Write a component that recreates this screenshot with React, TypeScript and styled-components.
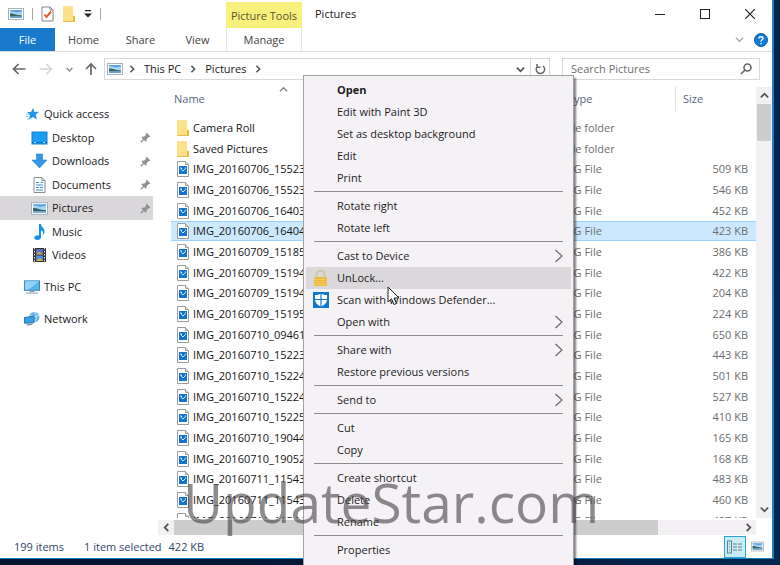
import React from "react";
import styled, { createGlobalStyle, css } from "styled-components";

const GlobalStyle = createGlobalStyle`
  * { box-sizing: border-box; }
  html, body, #root { height: 100%; margin: 0; }
  body { overflow: hidden; }
  body, button, input, table {
    font-family: "Open Sans", "Noto Sans", sans-serif;
    font-size: 11px;
    line-height: 16px;
  }
  button, input { border: 0; padding: 0; margin: 0; background: none; color: inherit; }
  svg { display: block; flex: none; }
`;

const Desktop = styled.div`
  position: relative;
  display: flex;
  height: 100%;
  padding: 0 6px 6px 0;
  overflow: hidden;
  background: linear-gradient(100deg, #01142c 0%, #021b3b 60%, #03274f 100%);
`;

const Window = styled.main`
  flex: 1;
  min-width: 0;
  display: flex;
  flex-direction: column;
  background: #fff;
  border: solid #1883c4;
  border-width: 0 2px 1px 0;
  color: #1a1a1a;
`;

const TitleBar = styled.header`
  display: flex;
  height: 28px;
`;

const QuickTools = styled.div`
  display: flex;
  align-items: center;
  width: 226px;
  padding-left: 8px;
  gap: 8px;
`;

const Divider = styled.span`
  width: 1px;
  height: 12px;
  background: #a6a6a6;
`;

const IconButton = styled.button`
  display: flex;
  align-items: center;
  justify-content: center;
`;

const ToolsLabel = styled.div`
  width: 76px;
  margin-top: 2px;
  padding-top: 6px;
  text-align: center;
  background: #f8f07c;
  color: #55552f;
`;

const WindowTitle = styled.h1`
  flex: 1;
  margin: 0;
  padding: 6px 0 0 13px;
  font-size: 11px;
  font-weight: 400;
`;

const WindowButton = styled(IconButton)`
  width: 45px;
  height: 27px;
`;

const Tabs = styled.nav`
  display: flex;
  align-items: stretch;
  height: 24px;
  border-bottom: 1px solid #dadbdc;
  color: #444;
`;

const Tab = styled.button<{ $kind?: "file" | "tool" }>`
  width: 57px;
  ${({ $kind }) =>
    $kind === "file" && css`width: 55px; background: #1979ca; color: #fff;`}
  ${({ $kind }) =>
    $kind === "tool" && css`width: 76px; border: solid #e6e6e6; border-width: 0 1px;`}
`;

const TabsEnd = styled.div`
  flex: 1;
  display: flex;
  align-items: center;
  justify-content: flex-end;
  gap: 10px;
  padding-right: 4px;
`;

const NavRow = styled.div`
  display: flex;
  align-items: center;
  height: 34px;
  padding: 0 12px;
`;

const History = styled.div`
  display: flex;
  align-items: center;
  gap: 13px;
  width: 92px;
`;

const UpGroup = styled.div`
  display: flex;
  align-items: center;
  gap: 11px;
`;

const AddressBar = styled.div`
  flex: 1;
  display: flex;
  align-items: center;
  height: 22px;
  border: 1px solid #d9d9d9;
  padding-left: 2px;
  > svg:first-child { margin-right: 5px; }
`;

const Crumb = styled.button`
  margin: 0 8px;
`;

const AddressEnd = styled.div`
  display: flex;
  align-self: stretch;
  margin-left: auto;
  button { width: 19px; }
  button + button { border-left: 1px solid #d9d9d9; }
`;

const SearchBox = styled.label`
  display: flex;
  align-items: center;
  width: 198px;
  height: 22px;
  margin-left: 12px;
  padding: 0 7px 0 8px;
  border: 1px solid #d9d9d9;
`;

const SearchInput = styled.input`
  flex: 1;
  min-width: 0;
  outline: 0;
  &::placeholder { color: #6d6d6d; opacity: 1; }
`;

const Body = styled.div`
  flex: 1;
  display: flex;
  min-height: 0;
`;

const Tree = styled.nav`
  width: 158px;
  padding: 16px 5px 0 0;
`;

const TreeGroup = styled.div`
  margin-bottom: 8px;
`;

const TreeItem = styled.button<{ $child?: boolean; $selected?: boolean }>`
  display: flex;
  align-items: center;
  gap: 4px;
  width: 100%;
  height: 24px;
  padding-left: ${({ $child }) => ($child ? 31 : 24)}px;
  background: ${({ $selected }) => ($selected ? "#dad7da" : "transparent")};
  text-align: left;
  &:nth-child(even) { height: 23px; }
  svg:nth-of-type(2) { margin-left: auto; margin-right: 2px; }
`;

const FilePane = styled.section`
  flex: 1;
  min-width: 0;
  display: flex;
  flex-direction: column;
`;

const PaneTop = styled.div`
  flex: 1;
  min-height: 0;
  display: flex;
`;

const ListArea = styled.div`
  flex: 1;
  min-width: 0;
  padding-left: 13px;
  margin-bottom: 2px;
  overflow: hidden;
`;

const FileTable = styled.table`
  width: 100%;
  table-layout: fixed;
  border-collapse: separate;
  border-spacing: 0;
  th, td { padding: 0; white-space: nowrap; overflow: hidden; }
`;

const HeadCell = styled.th<{ $width?: number }>`
  width: ${({ $width }) => ($width ? `${$width}px` : "auto")};
  height: 31px;
  text-align: left;
  vertical-align: top;
  font-weight: 400;
  color: #56687f;
`;

const HeadLabel = styled.div<{ $line?: boolean }>`
  display: flex;
  height: 25px;
  padding: 5px 0 0 ${({ $line }) => ($line ? 7 : 3)}px;
  border-left: ${({ $line }) => ($line ? "1px solid #e5e5e5" : "0")};
  svg { margin-left: 74px; margin-top: -6px; }
`;

const FileRow = styled.tr<{ $selected?: boolean }>`
  height: 21px;
  &:nth-child(3n) { height: 20px; }
  td {
    border: solid ${({ $selected }) => ($selected ? "#99d1ff" : "transparent")};
    border-width: ${({ $selected }) => ($selected ? "1px 0" : "0")};
    background: ${({ $selected }) => ($selected ? "#cce8ff" : "transparent")};
  }
`;

const FileName = styled.div`
  display: flex;
  align-items: center;
  gap: 3px;
  padding-left: 5px;
  color: #151515;
`;

const TypeText = styled.div`
  padding-left: 4px;
  color: #6d6d6d;
`;

const SizeText = styled.div`
  padding-right: 8px;
  text-align: right;
  color: #6d6d6d;
`;

const VScroll = styled.div`
  display: flex;
  flex-direction: column;
  width: 16px;
  margin: 1px 0 2px;
  background: #f3f0f3;
  button { height: 17px; }
`;

const VThumb = styled.div`
  height: 37px;
  margin: 0 1px auto;
  background: #cdcdcd;
`;

const HScroll = styled.div`
  display: flex;
  height: 15px;
  margin-right: 16px;
  background: #f3f0f3;
  button { width: 16px; }
`;

const HThumb = styled.div`
  width: 81%;
  margin-right: auto;
  background: #cdcdcd;
`;

const StatusBar = styled.footer`
  display: flex;
  align-items: center;
  height: 23px;
  padding: 0 4px 0 14px;
  color: #33476b;
  span { margin-right: 20px; }
  span + span { margin-right: 7px; }
`;

const ViewButton = styled(IconButton)<{ $active?: boolean }>`
  width: 22px;
  height: 22px;
  border: ${({ $active }) => ($active ? "1px solid #2aa3d0" : "0")};
  background: ${({ $active }) => ($active ? "#c9ebf6" : "transparent")};
`;

const ViewSwitch = styled.div`
  display: flex;
  margin-left: auto;
`;

const Menu = styled.div`
  position: absolute;
  left: 303px;
  top: 75px;
  width: 271px;
  padding: 3px 2px 8px;
  background: #f5f2f6;
  border: 1px solid #a3a1a4;
  box-shadow: 2px 3px 2px rgba(0, 0, 0, 0.5);
  color: #1c1c1c;
`;

const MenuItem = styled.button<{ $bold?: boolean; $hot?: boolean }>`
  display: grid;
  grid-template-columns: 24px 1fr 10px;
  align-items: center;
  width: 100%;
  height: 22px;
  padding: 0 7px;
  text-align: left;
  font-weight: ${({ $bold }) => ($bold ? 700 : 400)};
  background: ${({ $hot }) => ($hot ? "#dad8db" : "transparent")};
`;

const MenuRule = styled.hr`
  height: 1px;
  margin: 2px 8px 3px;
  border: 0;
  background: #8c8b8e;
`;

const Watermark = styled.div`
  position: absolute;
  left: 183px;
  top: 464px;
  font-size: 55px;
  line-height: 76px;
  color: rgba(72, 70, 72, 0.62);
  pointer-events: none;
`;

const Pointer = styled.svg`
  position: absolute;
  left: 387px;
  top: 286px;
`;

type Dir = "up" | "down" | "left" | "right";
const turns: Record<Dir, string> = {
  right: "M3 1l4 4-4 4",
  left: "M7 1L3 5l4 4",
  down: "M1 3l4 4 4-4",
  up: "M1 7l4-4 4 4",
};

const Chevron = ({ dir, size = 8, color = "#555", weight = 2 }: {
  dir: Dir; size?: number; color?: string; weight?: number;
}) => (
  <svg width={size} height={size} viewBox="0 0 10 10" fill="none" stroke={color} strokeWidth={weight}>
    <path d={turns[dir]} />
  </svg>
);

const SubmenuArrow = () => (
  <svg width="10" height="14" viewBox="0 0 10 14" fill="none" stroke="#6b696c" strokeWidth="1.2">
    <path d="M1.500 1l6.500 6-6.500 6" />
  </svg>
);

const PictureIcon = ({ size = 16 }: { size?: number }) => (
  <svg width={size} height={size} viewBox="0 0 16 16">
    <rect x=".5" y="2.500" width="15" height="11" fill="#fff" stroke="#a8b0b8" />
    <rect x="2" y="4" width="12" height="8" fill="#a9d6f5" />
    <path d="M2 4h12v1.500L9 6.500 2 5z" fill="#5fa3dc" />
    <path d="M2 7.500c3-.5 5 1.500 12 2v1H2z" fill="#33625f" />
    <path d="M2 10.500h12V12H2z" fill="#6f9fc4" />
  </svg>
);

const FolderIcon = () => (
  <svg width="14" height="16" viewBox="0 0 14 16">
    <path d="M1 .5h10v9l2 1v5H1z" fill="#f3cf63" />
    <path d="M1 .5h10v15H1z" fill="#fce08a" />
    <path d="M11 9.500l2 1v5h-2z" fill="#e9b93f" />
    <path d="M1 15.500h12" stroke="#e6bd4b" />
  </svg>
);

const ImageFileIcon = () => (
  <svg width="14" height="16" viewBox="0 0 14 16">
    <path d="M1.500.5h8l3 3v12h-11z" fill="#fff" stroke="#9a9ea3" />
    <path d="M9.500.5v3h3" fill="#e4e7ea" stroke="#9a9ea3" />
    <rect x="3" y="5" width="8" height="8" fill="#1573d0" />
    <path d="M4 7h1.500v1.500L7 10l1-1 1.500-1.500V6.500" fill="none" stroke="#d5ecff" />
  </svg>
);

const CheckDocIcon = () => (
  <svg width="13" height="16" viewBox="0 0 13 16" fill="none">
    <path d="M1 1h8l3 3v11H1z" fill="#fff" stroke="#858585" />
    <path d="M9 1v3h3" stroke="#858585" />
    <path d="M3.500 8.500l2 2.500 4.500-5.500" stroke="#e8592a" strokeWidth="2" />
  </svg>
);

const StarIcon = () => (
  <svg width="16" height="16" viewBox="0 0 16 16">
    <path d="M9 2l1.500 4 4.500-.2-3.300 2.900L13 13.500 9 11l-4 2.500 1-4.600L3.200 6 7 6z" fill="#2293e8" />
    <path d="M2 8h3M1.500 10.500h3M3 13h2" stroke="#7bc1f3" />
  </svg>
);

const DesktopIcon = () => (
  <svg width="17" height="16" viewBox="0 0 17 16">
    <rect x="1" y="2" width="15" height="12" fill="#1c9cf2" stroke="#1680cf" />
    <path d="M1 12.500h15" stroke="#136fb8" />
    <path d="M3 12.500h2m7 0h2" stroke="#9bd6ff" />
  </svg>
);

const DownloadIcon = () => (
  <svg width="17" height="16" viewBox="0 0 17 16">
    <path d="M5.500 1h6v6H16l-7.500 8L1 7h4.500z" fill="#3596e8" stroke="#2079c9" strokeWidth=".6" />
  </svg>
);

const DocumentIcon = () => (
  <svg width="17" height="16" viewBox="0 0 17 16" fill="none">
    <path d="M3 .5h8l3 3v12H3z" fill="#fff" stroke="#8a8f94" />
    <path d="M11 .5v3h3" stroke="#8a8f94" />
    <path d="M5 5.500h3M5 8h7M5 10.500h3m1 0h3M5 13h7M9.500 5.500H12" stroke="#3a8fd4" />
  </svg>
);

const MusicIcon = () => (
  <svg width="17" height="16" viewBox="0 0 17 16">
    <path d="M8 0h2c0 3 4 4 3.500 8-.2 1.500-.8 2.500-1.500 3 .5-3-.5-4-2-4.500V13c0 2-1.500 3-3.500 3S3 15 3.200 13.500 5 11 8 11.200z" fill="#1593ea" />
  </svg>
);

const VideoIcon = () => (
  <svg width="17" height="16" viewBox="0 0 17 16">
    <rect x="2" y="1" width="13" height="14" fill="#333" />
    <path d="M3.500 1v14M13.500 1v14" stroke="#e8e8e8" strokeDasharray="1.500 1.500" />
    <rect x="5" y="2" width="7" height="5.500" fill="#5c6fc0" />
    <path d="M5 7.500l3-3 4 3z" fill="#d7a443" />
    <rect x="5" y="8.500" width="7" height="5.500" fill="#4b8fd8" />
    <path d="M5 14l4-3 3 3z" fill="#d6b23f" />
  </svg>
);

const PcIcon = () => (
  <svg width="16" height="16" viewBox="0 0 17 16">
    <rect x=".5" y="1.500" width="16" height="10" fill="#52b5ee" stroke="#3a7fae" />
    <path d="M1 2h15L5 11H1z" fill="#90d3f8" />
    <path d="M6 12h5v1.500H6z" fill="#87a2b4" />
    <path d="M2 14.500h13" stroke="#7e9cb0" />
  </svg>
);

const NetworkIcon = () => (
  <svg width="16" height="16" viewBox="0 0 17 16">
    <circle cx="11" cy="6" r="5.500" fill="#63b3e6" />
    <path d="M6 4c3 2 7 2 10 0M11 .5c3 3 3 8 0 11" fill="none" stroke="#c5e6fa" />
    <path d="M.5 6.500l10-1.500v7l-10 .5z" fill="#35a1e8" stroke="#27709f" />
    <path d="M3 14.500l6-1" stroke="#6f8ea2" strokeWidth="1.500" />
  </svg>
);

const PinIcon = () => (
  <svg width="11" height="11" viewBox="0 0 11 11">
    <path d="M6.500.5l4 4-1 .6-1 .1-2 2 .1 1.800-.9.8L1.400 5.400l.9-.8 1.800.1 2-2V1.500z" fill="#8e9296" />
    <path d="M3.800 7.200L.8 10.200" stroke="#8e9296" strokeWidth="1.300" />
  </svg>
);

const LockIcon = () => (
  <svg width="15" height="16" viewBox="0 0 15 16" fill="none">
    <path d="M3.500 8V4.500a4 4 0 018 0V8" stroke="#cfc6a5" strokeWidth="2" />
    <rect x="1" y="7" width="13" height="9" rx="1" fill="#eebb3f" />
    <path d="M1.500 9.500h12M1.500 12h12M1.500 14.500h12" stroke="#f3c964" />
  </svg>
);

const DefenderIcon = () => (
  <svg width="16" height="16" viewBox="0 0 16 16">
    <rect width="16" height="16" fill="#0b78d4" />
    <path d="M8 1.500c2 1.200 4 1.500 6 1.500v4.500c0 3.500-2.500 5.500-6 7-3.500-1.500-6-3.500-6-7V3c2 0 4-.3 6-1.500z" fill="#fff" />
    <path d="M8 1v14M1 7.500h14" stroke="#0b78d4" strokeWidth="1.200" />
  </svg>
);

const Arrow = ({ kind }: { kind: "back" | "forward" | "up" }) => (
  <svg width="14" height="14" viewBox="0 0 14 14" fill="none" strokeWidth="1.700"
    stroke={kind === "forward" ? "#d4d4d4" : "#686868"}>
    <path d={{
      back: "M13.500 7H1.500M6.500 2l-5 5 5 5",
      forward: "M.5 7h12M7.500 2l5 5-5 5",
      up: "M7 13V2M2 7l5-5 5 5",
    }[kind]} />
  </svg>
);

const files: [string, string][] = [
  ["Camera Roll", ""],
  ["Saved Pictures", ""],
  ["IMG_20160706_15523", "509 KB"],
  ["IMG_20160706_15523", "546 KB"],
  ["IMG_20160706_16403", "452 KB"],
  ["IMG_20160706_16404", "423 KB"],
  ["IMG_20160709_15185", "386 KB"],
  ["IMG_20160709_15194", "422 KB"],
  ["IMG_20160709_15194", "204 KB"],
  ["IMG_20160709_15195", "224 KB"],
  ["IMG_20160710_09461", "650 KB"],
  ["IMG_20160710_15223", "443 KB"],
  ["IMG_20160710_15224", "501 KB"],
  ["IMG_20160710_15224", "527 KB"],
  ["IMG_20160710_15225", "410 KB"],
  ["IMG_20160710_19044", "165 KB"],
  ["IMG_20160710_19052", "168 KB"],
  ["IMG_20160711_11543", "483 KB"],
  ["IMG_20160711_11543", "460 KB"],
  ["IMG_20160711_11544", "497 KB"],
];
const selectedFile = 5;

const places = [
  { label: "Desktop", icon: <DesktopIcon />, pinned: true },
  { label: "Downloads", icon: <DownloadIcon />, pinned: true },
  { label: "Documents", icon: <DocumentIcon />, pinned: true },
  { label: "Pictures", icon: <PictureIcon size={17} />, pinned: true },
  { label: "Music", icon: <MusicIcon />, pinned: false },
  { label: "Videos", icon: <VideoIcon />, pinned: false },
];

type Entry = { label: string; icon?: React.ReactNode; bold?: boolean; hot?: boolean; sub?: boolean };
const menuGroups: Entry[][] = [
  [
    { label: "Open", bold: true },
    { label: "Edit with Paint 3D" },
    { label: "Set as desktop background" },
    { label: "Edit" },
    { label: "Print" },
  ],
  [{ label: "Rotate right" }, { label: "Rotate left" }],
  [
    { label: "Cast to Device", sub: true },
    { label: "UnLock...", icon: <LockIcon />, hot: true },
    { label: "Scan with Windows Defender...", icon: <DefenderIcon /> },
    { label: "Open with", sub: true },
  ],
  [{ label: "Share with", sub: true }, { label: "Restore previous versions" }],
  [{ label: "Send to", sub: true }],
  [{ label: "Cut" }, { label: "Copy" }],
  [{ label: "Create shortcut" }, { label: "Delete" }, { label: "Rename" }],
  [{ label: "Properties" }],
];

const ContextMenu = () => (
  <Menu role="menu">
    {menuGroups.map((group, g) => (
      <React.Fragment key={g}>
        {g > 0 && <MenuRule />}
        {group.map((item) => (
          <MenuItem key={item.label} role="menuitem" $bold={item.bold} $hot={item.hot}>
            <span>{item.icon}</span>
            {item.label}
            {item.sub && <SubmenuArrow />}
          </MenuItem>
        ))}
      </React.Fragment>
    ))}
  </Menu>
);

export default function App() {
  return (
    <>
      <GlobalStyle />
      <Desktop>
        <Window>
          <TitleBar>
            <QuickTools>
              <PictureIcon />
              <Divider />
              <IconButton aria-label="Properties"><CheckDocIcon /></IconButton>
              <IconButton aria-label="New folder"><FolderIcon /></IconButton>
              <IconButton aria-label="Customize toolbar">
                <svg width="8" height="8" viewBox="0 0 8 8" fill="#222">
                  <path d="M1 0h6v1.200H1zM0 3.500h8l-4 4z" />
                </svg>
              </IconButton>
              <Divider />
            </QuickTools>
            <ToolsLabel>Picture Tools</ToolsLabel>
            <WindowTitle>Pictures</WindowTitle>
            <WindowButton aria-label="Minimize">
              <svg width="10" height="10" stroke="#222"><path d="M0 5.500h10" /></svg>
            </WindowButton>
            <WindowButton aria-label="Maximize">
              <svg width="10" height="10" stroke="#222" fill="none"><rect x=".5" y=".5" width="9" height="9" /></svg>
            </WindowButton>
            <WindowButton aria-label="Close">
              <svg width="10" height="10" stroke="#222" strokeWidth="1.200"><path d="M0 0l10 10M10 0L0 10" /></svg>
            </WindowButton>
          </TitleBar>

          <Tabs>
            <Tab $kind="file">File</Tab>
            <Tab>Home</Tab>
            <Tab>Share</Tab>
            <Tab>View</Tab>
            <Tab $kind="tool">Manage</Tab>
            <TabsEnd>
              <IconButton aria-label="Expand ribbon"><Chevron dir="down" size={9} color="#aaa" weight={1.5} /></IconButton>
              <IconButton aria-label="Help">
                <svg width="14" height="14" viewBox="0 0 14 14" fill="none">
                  <circle cx="7" cy="7" r="6.500" fill="#0f7bd3" stroke="#0a62ad" />
                  <path d="M5 5.500c0-2.500 4-2.300 4-.2C9 6.700 7 6.800 7 8.500M7 9.800v1.400" stroke="#fff" strokeWidth="1.400" />
                </svg>
              </IconButton>
            </TabsEnd>
          </Tabs>

          <NavRow>
            <History>
              <IconButton aria-label="Back"><Arrow kind="back" /></IconButton>
              <IconButton aria-label="Forward"><Arrow kind="forward" /></IconButton>
              <UpGroup>
                <IconButton aria-label="Recent"><Chevron dir="down" size={7} color="#888" /></IconButton>
                <IconButton aria-label="Up"><Arrow kind="up" /></IconButton>
              </UpGroup>
            </History>
            <AddressBar>
              <PictureIcon />
              <Chevron dir="right" />
              <Crumb>This PC</Crumb>
              <Chevron dir="right" />
              <Crumb>Pictures</Crumb>
              <Chevron dir="right" />
              <AddressEnd>
                <IconButton aria-label="Address history"><Chevron dir="down" size={9} /></IconButton>
                <IconButton aria-label="Refresh">
                  <svg width="11" height="12" viewBox="0 0 11 12" fill="none" stroke="#666" strokeWidth="1.500">
                    <path d="M8 3a4.200 4.200 0 11-5.500.3M2 1v3.200h3.500" />
                  </svg>
                </IconButton>
              </AddressEnd>
            </AddressBar>
            <SearchBox>
              <SearchInput type="search" aria-label="Search Pictures" placeholder="Search Pictures" />
              <svg width="12" height="12" viewBox="0 0 12 12" fill="none" stroke="#666" strokeWidth="1.600">
                <circle cx="7.500" cy="4.500" r="3.500" /><path d="M5 7L1 11" />
              </svg>
            </SearchBox>
          </NavRow>

          <Body>
            <Tree>
              <TreeGroup>
                <TreeItem><StarIcon />Quick access</TreeItem>
                {places.map((p) => (
                  <TreeItem key={p.label} $child $selected={p.label === "Pictures"}>
                    {p.icon}{p.label}{p.pinned && <PinIcon />}
                  </TreeItem>
                ))}
              </TreeGroup>
              <TreeGroup><TreeItem><PcIcon />This PC</TreeItem></TreeGroup>
              <TreeGroup><TreeItem><NetworkIcon />Network</TreeItem></TreeGroup>
            </Tree>
            <FilePane>
              <PaneTop>
                <ListArea>
                  <FileTable>
                    <thead>
                      <tr>
                        <HeadCell><HeadLabel>Name<Chevron dir="up" size={9} color="#888" weight={1.5} /></HeadLabel></HeadCell>
                        <HeadCell $width={115}><HeadLabel $line>Type</HeadLabel></HeadCell>
                        <HeadCell $width={81}><HeadLabel $line>Size</HeadLabel></HeadCell>
                      </tr>
                    </thead>
                    <tbody>
                      {files.map(([name, size], i) => (
                        <FileRow key={i} $selected={i === selectedFile}>
                          <td><FileName>{size ? <ImageFileIcon /> : <FolderIcon />}{name}</FileName></td>
                          <td><TypeText>{size ? "JPG File" : "File folder"}</TypeText></td>
                          <td><SizeText>{size}</SizeText></td>
                        </FileRow>
                      ))}
                    </tbody>
                  </FileTable>
                </ListArea>
                <VScroll>
                  <IconButton aria-label="Scroll up"><Chevron dir="up" size={9} /></IconButton>
                  <VThumb />
                  <IconButton aria-label="Scroll down"><Chevron dir="down" size={9} /></IconButton>
                </VScroll>
              </PaneTop>
              <HScroll>
                <IconButton aria-label="Scroll left"><Chevron dir="left" size={9} /></IconButton>
                <HThumb />
                <IconButton aria-label="Scroll right"><Chevron dir="right" size={9} /></IconButton>
              </HScroll>
            </FilePane>
          </Body>

          <StatusBar>
            <span>199 items</span>
            <span>1 item selected</span>
            <span>422 KB</span>
            <ViewSwitch>
              <ViewButton $active aria-label="Details view">
                <svg width="16" height="14" viewBox="0 0 16 14" fill="none" stroke="#60808f">
                  <rect x=".5" y="1" width="4" height="12" />
                  <path d="M2 4h1M2 7h1M2 10h1M6 4h4m1 0h4M6 7h4m1 0h4M6 10h4m1 0h4" />
                </svg>
              </ViewButton>
              <ViewButton aria-label="Large icons view"><PictureIcon size={13} /></ViewButton>
            </ViewSwitch>
          </StatusBar>
        </Window>

        <ContextMenu />
        <Watermark>UpdateStar.com</Watermark>
        <Pointer width="13" height="20" viewBox="0 0 13 20">
          <path d="M1 1v15l3.500-3.200L7 18.500l2.500-1-2.500-5.500h5z" fill="#fff" stroke="#222" />
        </Pointer>
      </Desktop>
    </>
  );
}
